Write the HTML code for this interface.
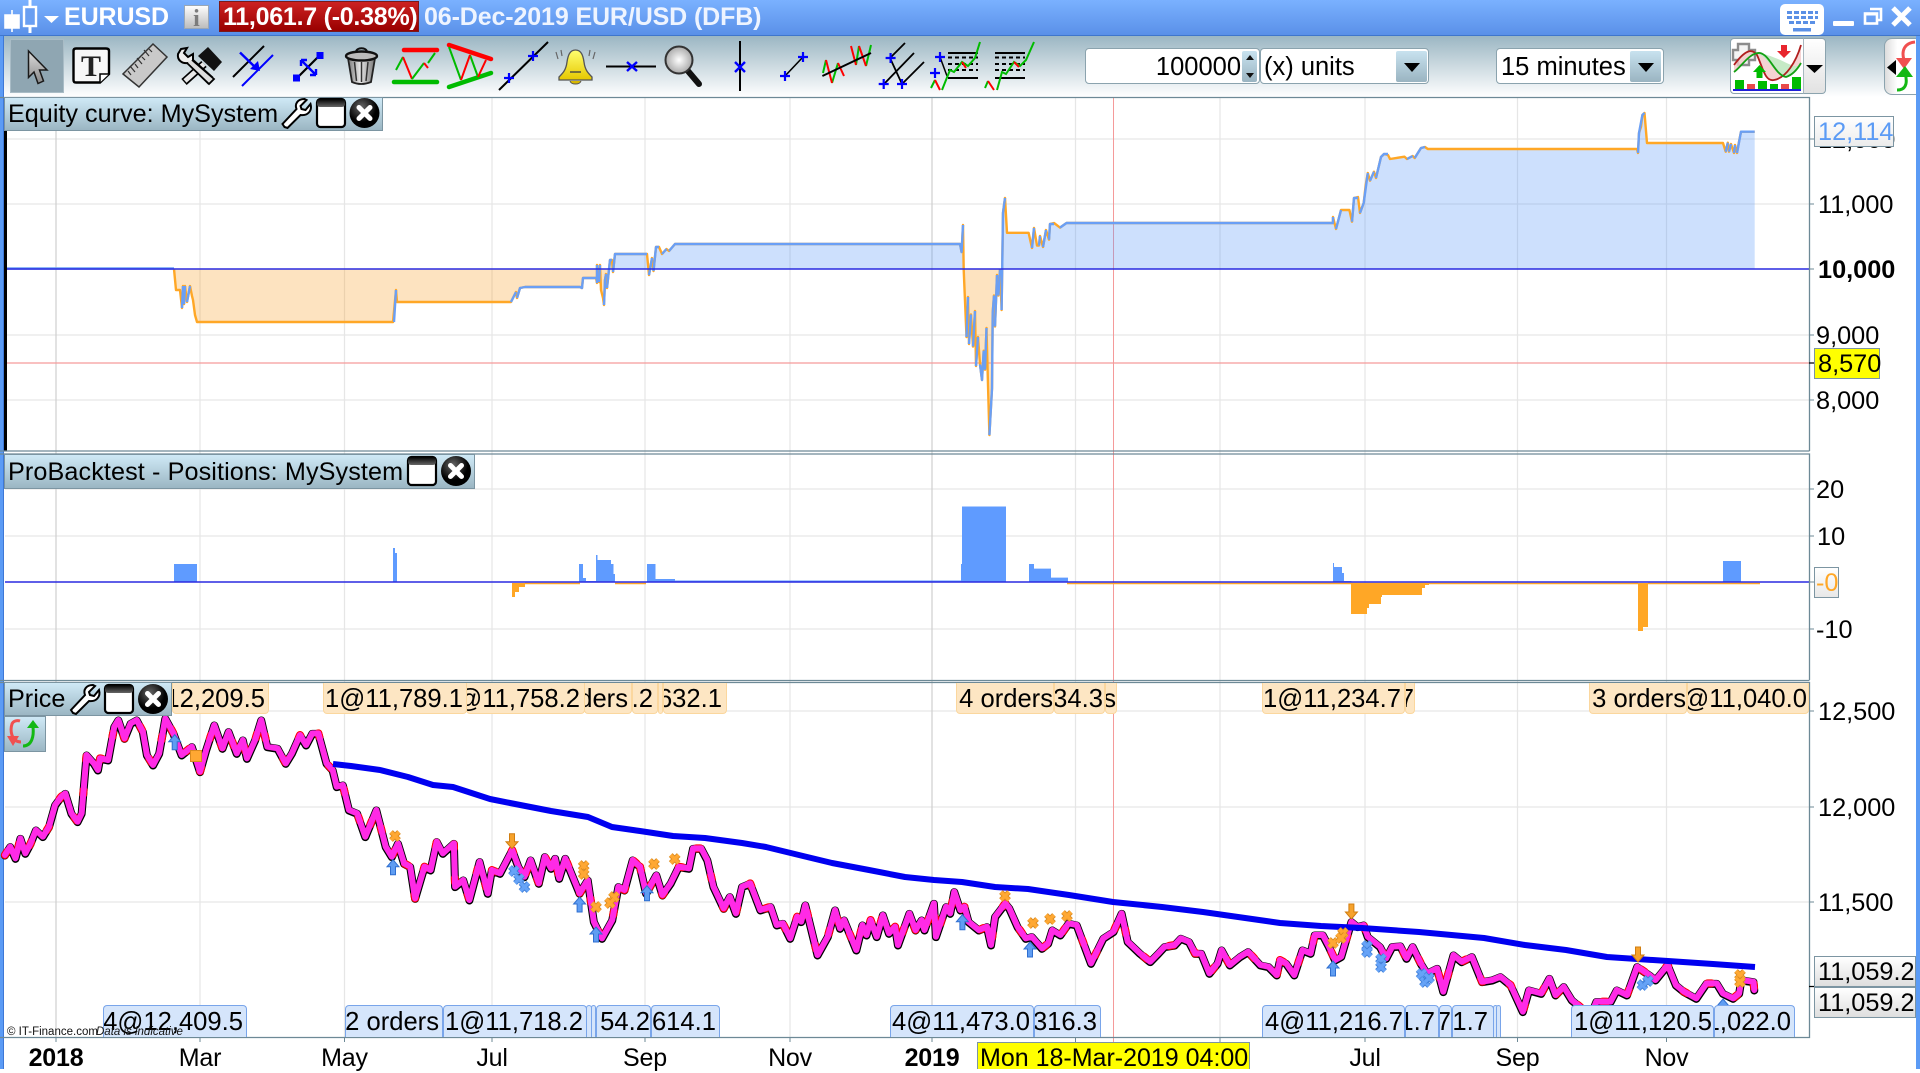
<!DOCTYPE html>
<html lang="en"><head><meta charset="utf-8"><title>EURUSD</title>
<style>
html,body{margin:0;padding:0;background:#fff}
body{width:1920px;height:1069px;position:relative;overflow:hidden;font-family:"Liberation Sans",Arial,sans-serif;font-size:25px;color:#000}
div,span{box-sizing:border-box}
.a{position:absolute;white-space:nowrap}
svg{position:absolute;left:0;top:0}
.n{vector-effect:non-scaling-stroke;fill:none;stroke-linejoin:round}
.y{position:absolute;left:1818px;height:32px;line-height:32px;font-size:25.3px}
.x{position:absolute;top:1043px;height:30px;line-height:30px;transform:translateX(-50%);letter-spacing:-.2px}
.o,.b{position:absolute;display:flex;justify-content:flex-end;overflow:hidden;white-space:nowrap;padding-right:3px;font-size:25.6px}
.o{top:683px;height:31px;line-height:32px;background:#fde6c3;border:1px solid #fbd79e;border-top:0;border-radius:0 0 4px 4px}
.b{top:1005px;height:32px;line-height:33px;background:#d5e5fb;border:1px solid #79a5ea;border-bottom:0;border-radius:4px 4px 0 0}
.h{position:absolute;background:linear-gradient(#cfe9f6,#9bb6c3);border:1px solid #7c95a2;line-height:32px;padding-left:3px;white-space:nowrap;font-size:25.2px}
.tag{position:absolute;left:1814px;border:1px solid #7c95a2;height:31px;line-height:31px;padding-left:3px;font-size:25.3px}
.inp{position:absolute;top:48px;height:36px;background:#fff;border:1px solid #8ba3ae;border-radius:4px;line-height:36px;font-size:25.5px}
.dd{position:absolute;top:51px;width:31px;height:31px;background:linear-gradient(#c8e2ef,#9ab4c1);border-radius:2px}
.dd:after{content:"";position:absolute;left:8px;top:12px;border-left:8px solid transparent;border-right:8px solid transparent;border-top:9px solid #000}
</style></head><body>

<div class="a" style="left:0;top:0;width:1920px;height:36px;background:linear-gradient(#7ab1ff,#5a90e8);border-bottom:1px solid #3f76cc"></div>
<div class="a" style="left:0;top:36px;width:1920px;height:61px;background:linear-gradient(#9bb6c3,#fff)"></div>
<div class="a" style="left:0;top:36px;width:4px;height:1033px;background:#5b9bf5;border-right:1px solid #3e78d6"></div>
<div class="a" style="left:1916px;top:36px;width:4px;height:1033px;background:#5b9bf5"></div>
<div class="a" style="left:4px;top:97px;width:1912px;height:972px;background:#fff"></div>
<div class="a" style="left:10px;top:39px;width:54px;height:54px;background:#8fa6b2;border:1px solid #a9bcc6"></div>

<svg width="1920" height="1069" viewBox="0 0 1920 1069">
<defs>
<clipPath id="up"><rect x="0" y="97" width="1809" height="172"/></clipPath>
<clipPath id="dn"><rect x="0" y="269" width="1809" height="182"/></clipPath>
<polyline id="p1" class="n" points="12,555 25,530 38,565 50,505 62,550 75,520 88,480 105,500 120,470 135,405 150,380 160,370 175,430 190,455 200,430 212,255 230,280 240,300 245,265 265,270 280,170 290,150 305,205 320,160 335,150 350,185 360,255 375,285 390,250 405,145 425,190 445,255 470,230 490,305 505,240 525,165 545,235 560,185 580,250 595,210 605,265 625,210 640,150 655,230 680,235 700,280 715,250 735,195 750,225 765,190 780,190 800,280 815,300 825,350 840,345 855,420 875,430 895,500 922,420 945,530 960,560 975,520 990,580 1005,590 1017,685 1040,590 1055,600 1070,515 1085,550 1112,520 1115,650 1135,630 1150,690 1175,575 1195,670 1205,600 1225,610 1255,540 1270,590 1285,620 1300,570 1320,640 1335,560 1350,595 1360,565 1370,625 1385,565 1420,670 1440,630 1455,755 1475,805 1500,750 1515,650 1530,660 1550,570 1568,590"/>
<polyline id="p2" class="n" points="0,590 15,670 40,615 55,675 75,640 95,590 120,595 130,535 150,535 165,570 180,650 205,715 220,680 235,730 250,650 270,640 295,720 320,710 335,765 350,760 368,805 385,740 395,755 405,705 435,855 460,800 478,720 490,775 500,750 530,840 545,765 555,795 565,750 580,800 595,735 610,790 625,770 632,825 660,730 675,780 690,750 697,780 720,700 725,800 750,710 760,730 770,665 785,720 795,710 805,755 830,780 850,770 860,825 870,740 895,700 905,715 925,770 945,805 960,800 985,835 1000,820 1010,780 1030,795 1050,760 1070,765 1105,880 1135,805 1160,785 1180,730 1195,815 1225,850 1250,875 1270,850 1285,830 1310,825 1325,805 1345,815 1360,850 1375,850 1395,910 1415,880 1425,840 1445,885 1470,860 1490,845 1520,885 1540,890 1560,915 1568,870"/>
<polyline id="p3" class="n" points="0,870 15,880 35,915 55,840 75,850 85,795 105,795 120,830 135,870 150,860 175,755 190,770 205,765 215,800 235,820 245,830 260,865 275,830 295,828 310,865 325,830 345,880 360,910 385,895 400,965 425,855 445,875 470,860 495,935 520,930 540,920 565,945 595,1025 610,960 640,970 660,925 675,975 695,950 715,990 735,1010 750,1030 770,1010 775,995 810,995 825,960 850,975 875,890 905,915 920,930 950,885 970,945 990,965 1020,985 1045,940 1070,940 1085,970 1110,985 1125,970 1130,930 1160,935 1162,960"/>
<g id="xo"><path d="M-4-4L4 4M4-4L-4 4" stroke="#d98a20" stroke-width="5.2" fill="none"/><path d="M-4-4L4 4M4-4L-4 4" stroke="#ffa833" stroke-width="3.4" fill="none"/></g>
<g id="xb"><path d="M-4-4L4 4M4-4L-4 4" stroke="#3f7fd8" stroke-width="5.2" fill="none"/><path d="M-4-4L4 4M4-4L-4 4" stroke="#66a3f7" stroke-width="3.4" fill="none"/></g>
<path id="au" d="M0-7L6 0H2.5V8H-2.5V0H-6Z" fill="#5f9df2" stroke="#2f6fd0" stroke-width="1"/>
<path id="ad" d="M0 7L6 0H2.5V-8H-2.5V0H-6Z" fill="#f6a22c" stroke="#d07d10" stroke-width="1"/>
</defs>

<!-- grid -->
<g stroke="#e6e6e6" stroke-width="1.2">
<path d="M5 139H1809M5 204H1809M5 335H1809M5 400H1809"/>
<path d="M5 489H1809M5 536H1809M5 629H1809"/>
<path d="M5 711H1809M5 807H1809M5 902H1809"/>
<path d="M200 97V1037M344.5 97V1037M492 97V1037M645 97V1037M790 97V1037M1075.5 97V1037M1220 97V1037M1365 97V1037M1517.5 97V1037M1666.5 97V1037"/>
</g>
<path d="M56 97V1037M932 97V1037" stroke="#cfcfcf" stroke-width="1.2"/>
<path d="M1113.5 97V1042" stroke="#f59a9a" stroke-width="1"/>
<path d="M56 1037V1042M200 1037V1042M344.5 1037V1042M492 1037V1042M645 1037V1042M790 1037V1042M932 1037V1042M1075.5 1037V1042M1220 1037V1042M1365 1037V1042M1517.5 1037V1042M1666.5 1037V1042" stroke="#6d8996" stroke-width="1"/>

<!-- equity fills -->
<polygon clip-path="url(#up)" fill="#5b97fa" fill-opacity=".3" points="174,269 176,290 180,290 182,308 183,286 184,304 185,286 187,302 190,286 192,296 193,300 195,315 197,322 393,322 396,290 397,302 511,302 513,298 516,292 517,298 520,288 525,287 580,287 582,288 583,278 596,278 597,283 597,265 599,282 600,265 601,290 603,298 604,305 605,280 606,274 607,288 610,260 612,260 613,272 615,254 647,254 649,275 652,258 653.5,271 656,247 659,247 662,254 666.5,249 669,251 675,244 960,244 961.6,252 963,225 963.7,269.7 966.5,337 968,297 969,344 971,314.5 973,346.5 975,311 976,366 978,337 980,364.5 982,380 983.7,350.7 985,369.7 986.5,328 988,385 989.4,435 992,388.6 992.7,312.8 994,295.5 995,326.5 997,275 998.4,295.5 1000,269.7 1001.6,310 1003,212.8 1005,198 1007,232.8 1028.6,232.8 1032,248 1034,228 1037,245.5 1039,245.5 1040,236 1043,247 1046,230 1049,239.7 1050,224 1054,223 1060,227.6 1066.5,223 1333,223 1333,217 1336,229 1341,210 1349.4,210 1352,221.7 1354,198 1358,197 1360,213 1363.7,203 1365.7,185 1367.8,173 1370,180.7 1374,171.7 1376,178 1381,157 1384,154 1388,155 1390,159 1404.5,156.7 1407,159 1412.6,156 1414.7,158 1421,148 1425,147 1427.8,149 1637,149 1638,153 1639,133 1641,126.7 1642.4,115 1644.5,113 1647,143 1723,143 1725.7,151.7 1727.8,142.7 1729,151.7 1731,144 1734,153 1735,145 1737,153 1739,141.7 1741,131.7 1754.7,131.7 1754.7,269"/>
<polygon clip-path="url(#dn)" fill="#f9a22d" fill-opacity=".3" points="174,269 176,290 180,290 182,308 183,286 184,304 185,286 187,302 190,286 192,296 193,300 195,315 197,322 393,322 396,290 397,302 511,302 513,298 516,292 517,298 520,288 525,287 580,287 582,288 583,278 596,278 597,283 597,265 599,282 600,265 601,290 603,298 604,305 605,280 606,274 607,288 610,260 612,260 613,272 615,254 647,254 649,275 652,258 653.5,271 656,247 659,247 662,254 666.5,249 669,251 675,244 960,244 961.6,252 963,225 963.7,269.7 966.5,337 968,297 969,344 971,314.5 973,346.5 975,311 976,366 978,337 980,364.5 982,380 983.7,350.7 985,369.7 986.5,328 988,385 989.4,435 992,388.6 992.7,312.8 994,295.5 995,326.5 997,275 998.4,295.5 1000,269.7 1001.6,310 1003,269 1754.7,269"/>

<path d="M5 363H1809" stroke="#f59a9a" stroke-width="1.2"/>

<!-- equity curve -->
<polyline fill="none" stroke="#ffa726" stroke-width="2.4" stroke-linejoin="round" points="174,269 176,290 180,290 182,308 183,286 184,304 185,286 187,302 190,286 192,296 193,300 195,315 197,322 393,322 396,290 397,302 511,302 513,298 516,292 517,298 520,288 525,287 580,287 582,288 583,278 596,278 597,283 597,265 599,282 600,265 601,290 603,298 604,305 605,280 606,274 607,288 610,260 612,260 613,272 615,254 647,254 649,275 652,258 653.5,271 656,247 659,247 662,254 666.5,249 669,251 675,244 960,244 961.6,252 963,225 963.7,269.7 966.5,337 968,297 969,344 971,314.5 973,346.5 975,311 976,366 978,337 980,364.5 982,380 983.7,350.7 985,369.7 986.5,328 988,385 989.4,435 992,388.6 992.7,312.8 994,295.5 995,326.5 997,275 998.4,295.5 1000,269.7 1001.6,310 1003,212.8 1005,198 1007,232.8 1028.6,232.8 1032,248 1034,228 1037,245.5 1039,245.5 1040,236 1043,247 1046,230 1049,239.7 1050,224 1054,223 1060,227.6 1066.5,223 1333,223 1333,217 1336,229 1341,210 1349.4,210 1352,221.7 1354,198 1358,197 1360,213 1363.7,203 1365.7,185 1367.8,173 1370,180.7 1374,171.7 1376,178 1381,157 1384,154 1388,155 1390,159 1404.5,156.7 1407,159 1412.6,156 1414.7,158 1421,148 1425,147 1427.8,149 1637,149 1638,153 1639,133 1641,126.7 1642.4,115 1644.5,113 1647,143 1723,143 1725.7,151.7 1727.8,142.7 1729,151.7 1731,144 1734,153 1735,145 1737,153 1739,141.7 1741,131.7 1754.7,131.7"/>
<path fill="none" stroke="#6a9ff5" stroke-width="2.4" stroke-linejoin="round" d="M5 268.5H174M182 308L183 286M184 304L185 286M187 302L190 286M394 322L396 290M511 302L513 298L516 292M517 298L520 288L525 287H580L582 288L583 278H596M597 283V265M599 282L600 265M604 305L605 280L606 274M607 288L610 260H612M613 272L615 254H647M649 275L652 258M653.5 271L656 247H659M662 254L666.5 249M669 251L675 244H960L961.6 252L963 225M966.5 337L968 297M969 344L971 314.5M973 346.5L975 311M976 366L978 337M980 364.5L982 380L983.7 350.7M985 369.7L986.5 328M989.4 435L992 388.6L992.7 312.8L994 295.5M995 326.5L997 275M998.4 295.5L1000 269.7M1001.6 310L1003 212.8L1005 198M1032 248L1034 228M1039 245.5L1040 236M1043 247L1046 230M1049 239.7L1050 224H1054M1060 227.6L1066.5 223H1333V217M1336 229L1341 210M1352 221.7L1354 198H1358M1360 213L1363.7 203L1367.8 173M1370 180.7L1374 171.7M1376 178L1381 157L1384 154H1388M1407 159L1412.6 156M1414.7 158L1421 148L1425 147M1638 153L1639 133L1642.4 115L1644.5 113M1725.7 151.7L1727.8 142.7M1729 151.7L1731 144M1734 153L1735 145M1737 153L1741 131.7H1754.7"/>
<path d="M5 269H1809" stroke="#2a2ae0" stroke-width="1.4"/>

<!-- positions bars -->
<g fill="#5f9bff">
<path d="M174 564H197V582H174ZM393 548H395V553H397V582H393ZM579 564H583V578H586V581H596V555H597.5V560H611V564H613.5V574H615V582H579ZM647 564H655.5V579H675V582H647ZM961 564H962V506.5H1006V582H961ZM1029 564H1034V568.6H1051V577.6H1068V582H1029ZM1333 563H1334V567H1342V573H1344V581H1351.4V582H1333ZM1723 561H1741V582H1723Z"/>
<path d="M675 581H961" stroke="#5f9bff" stroke-width="1" fill="none"/>
</g>
<g fill="#ffa726">
<path d="M512 583H525V587H519V592H515V597H512ZM1351 583H1429V585H1425V588H1422V595H1382V597H1381V604H1369V608H1367V614H1351ZM1638 583H1648V627H1643V631H1638Z"/>
<path d="M525 583.5H580M615 583.5H646M1067 583.5H1638M1648 583.5H1760" stroke="#ffa726" stroke-width="1.6" fill="none"/>
</g>
<path d="M5 582H1809" stroke="#2a2ae0" stroke-width="1.6"/>

<!-- price -->
<g stroke-linecap="round">
<g transform="translate(0,670.5) scale(.40816,.33333)" stroke="#000" stroke-width="8"><use href="#p1"/></g>
<g transform="translate(640,670.5) scale(.40816,.33333)" stroke="#000" stroke-width="8"><use href="#p2"/></g>
<g transform="translate(1280,670.5) scale(.40816,.33333)" stroke="#000" stroke-width="8"><use href="#p3"/></g>
<g transform="translate(0,670) scale(.40816,.33333)" stroke="#f00" stroke-width="8" stroke-dasharray="4 30"><use href="#p1"/></g>
<g transform="translate(640,670) scale(.40816,.33333)" stroke="#f00" stroke-width="8" stroke-dasharray="4 30"><use href="#p2"/></g>
<g transform="translate(1280,670) scale(.40816,.33333)" stroke="#f00" stroke-width="8" stroke-dasharray="4 30"><use href="#p3"/></g>
<g transform="translate(0,670) scale(.40816,.33333)" stroke="#ff2ae6" stroke-width="6"><use href="#p1"/></g>
<g transform="translate(640,670) scale(.40816,.33333)" stroke="#ff2ae6" stroke-width="6"><use href="#p2"/></g>
<g transform="translate(1280,670) scale(.40816,.33333)" stroke="#ff2ae6" stroke-width="6"><use href="#p3"/></g>
</g>
<!-- MA -->
<polyline fill="none" stroke="#0000f0" stroke-width="6" stroke-linejoin="round" points="333,764 351,766 380,770 408,777 433,785 453,787 490,799 510,803 551,811 588,817 612,827 640,831 673,836 705,838 742,843 766,847 803,856 832,863 869,870 905,877 934,880 962,882 995,887 1028,889 1069,895 1113,902 1162,907 1203,912 1280,923 1321,926 1362,928 1419,932 1484,938 1525,945 1566,950 1607,957 1668,961 1713,964 1755,967"/>

<!-- markers -->
<g>
<use href="#xo" x="395" y="836"/><use href="#xo" x="583.7" y="866"/><use href="#xo" x="583.7" y="874"/><use href="#xo" x="596" y="907"/><use href="#xo" x="614" y="897"/><use href="#xo" x="610" y="903"/><use href="#xo" x="654" y="864"/><use href="#xo" x="674.7" y="859"/><use href="#xo" x="1005" y="896"/><use href="#xo" x="1033" y="923"/><use href="#xo" x="1050" y="919"/><use href="#xo" x="1067" y="916"/><use href="#xo" x="1333" y="943"/><use href="#xo" x="1343" y="933"/><use href="#xo" x="1341" y="938"/><use href="#xo" x="1740" y="975"/><use href="#xo" x="1740" y="982"/>
<use href="#xb" x="514" y="871"/><use href="#xb" x="519" y="879"/><use href="#xb" x="524.5" y="887"/><use href="#xb" x="1367" y="946"/><use href="#xb" x="1367" y="952"/><use href="#xb" x="1381" y="959"/><use href="#xb" x="1381" y="967"/><use href="#xb" x="1421.6" y="974"/><use href="#xb" x="1425" y="982"/><use href="#xb" x="1429" y="978"/><use href="#xb" x="1642.4" y="985"/><use href="#xb" x="1648" y="981"/>
<use href="#au" x="174.7" y="741.7"/><use href="#au" x="393" y="866.7"/><use href="#au" x="579.6" y="904"/><use href="#au" x="596" y="934"/><use href="#au" x="647" y="892.7"/><use href="#au" x="962.4" y="921.7"/><use href="#au" x="1030" y="949"/><use href="#au" x="1333" y="968"/><use href="#au" x="1723" y="1006"/>
<use href="#ad" x="512" y="841.7"/><use href="#ad" x="1351.4" y="912"/><use href="#ad" x="1638" y="955"/>
<rect x="190.5" y="750.5" width="11" height="11" fill="#ffa833" stroke="#d98a20"/>
</g>

<!-- frame lines -->
<path d="M5.5 97V451" stroke="#000" stroke-width="3"/>
<g stroke="#6d8996" fill="none">
<path d="M0 97.5H1809.5V451M0 451H1809.5M0 454H1809.5V680M0 680.5H1809.5M0 682.5H1809.5V1037.5H0" stroke-width="1.3"/>
<path d="M1809 139H1814M1809 204H1814M1809 269H1814M1809 335H1814M1809 400H1814M1809 489H1814M1809 536H1814M1809 582H1814M1809 629H1814M1809 711H1814M1809 807H1814M1809 902H1814" stroke-width="1"/>
</g>
<path d="M1809 363H1814M1809 986.5H1814" stroke="#000" stroke-width="1.2"/>
</svg>

<!-- top labels -->
<div class="o" style="left:172px;width:97px">12,209.5</div>
<div class="o" style="left:323px;width:144px">1@11,789.1</div>
<div class="o" style="left:466px;width:119px;padding-right:4px">1@11,758.2</div>
<div class="o" style="left:584px;width:48px;padding-right:3px">2 orders</div>
<div class="o" style="left:632px;width:26px;padding-right:4px">.2</div>
<div class="o" style="left:658px;width:5px"></div>
<div class="o" style="left:663px;width:64px;padding-right:4px">1@11,632.1</div>
<div class="o" style="left:956px;width:98px;padding-right:0">4 orders</div>
<div class="o" style="left:1054px;width:51px;padding-right:1px">34.3</div>
<div class="o" style="left:1105px;width:12px;padding-right:0">s</div>
<div class="o" style="left:1262px;width:143px">1@11,234.7</div>
<div class="o" style="left:1405px;width:10px;padding-right:0">7</div>
<div class="o" style="left:1589px;width:98px;padding-right:0">3 orders</div>
<div class="o" style="left:1687px;width:122px;padding-right:1px">1@11,040.0</div>

<!-- bottom labels -->
<div class="b" style="left:103px;width:144px;padding-right:3px">4@12,409.5</div>
<div class="b" style="left:345px;width:98px;padding-right:3px">2 orders</div>
<div class="b" style="left:443px;width:144px;padding-right:3px">1@11,718.2</div>
<div class="b" style="left:586px;width:6px"></div>
<div class="b" style="left:591px;width:5px"></div>
<div class="b" style="left:596px;width:55px;padding-right:0">54.2</div>
<div class="b" style="left:651px;width:69px;padding-right:3px">614.1</div>
<div class="b" style="left:890px;width:144px;padding-right:3px">4@11,473.0</div>
<div class="b" style="left:1034px;width:67px;padding-right:3px">316.3</div>
<div class="b" style="left:1262px;width:143px;padding-right:1px">4@11,216.7</div>
<div class="b" style="left:1405px;width:34px;padding-right:3px">1.7</div>
<div class="b" style="left:1439px;width:13px;padding-right:0">7</div>
<div class="b" style="left:1452px;width:42px;padding-right:5px">1.7</div>
<div class="b" style="left:1493px;width:4px"></div>
<div class="b" style="left:1496px;width:5px"></div>
<div class="b" style="left:1571px;width:143px;padding-right:1px">1@11,120.5</div>
<div class="b" style="left:1714px;width:81px;padding-right:3px">1,022.0</div>

<div class="a" style="left:7px;top:1025px;font-size:11.5px;line-height:14px;color:#111">© IT-Finance.com</div>
<div class="a" style="left:96px;top:1025px;font-size:11.5px;line-height:14px;font-style:italic;color:#111">Data is indicative</div>

<!-- x axis -->
<div class="x" style="left:56px;font-weight:bold">2018</div>
<div class="x" style="left:200px">Mar</div>
<div class="x" style="left:344.5px">May</div>
<div class="x" style="left:492px">Jul</div>
<div class="x" style="left:645px">Sep</div>
<div class="x" style="left:790px">Nov</div>
<div class="x" style="left:932px;font-weight:bold">2019</div>
<div class="x" style="left:1365px">Jul</div>
<div class="x" style="left:1517.5px">Sep</div>
<div class="x" style="left:1666.5px">Nov</div>
<div class="a" style="left:977px;top:1042px;width:273px;height:27px;background:#ffff00;border:1px solid #7c95a2;border-bottom:0;line-height:31px;padding-left:2px;overflow:hidden">Mon 18-Mar-2019 04:00</div>

<!-- y axis -->
<div class="y" style="top:124px">12,000</div>
<div class="y" style="top:189px">11,000</div>
<div class="y" style="top:254px;font-weight:bold">10,000</div>
<div class="y" style="top:320px;left:1816px">9,000</div>
<div class="y" style="top:385px;left:1816px">8,000</div>
<div class="y" style="top:474px;left:1816px">20</div>
<div class="y" style="top:521px;left:1817px">10</div>
<div class="y" style="top:614px;left:1816px">-10</div>
<div class="y" style="top:696px">12,500</div>
<div class="y" style="top:792px">12,000</div>
<div class="y" style="top:887px">11,500</div>
<div class="tag" style="top:116px;width:80px;background:linear-gradient(#fff,#ececec);color:#5b9bf5">12,114</div>
<div class="tag" style="top:348px;width:66px;background:#ffff00">8,570</div>
<div class="tag" style="top:567px;width:25px;height:31px;padding-left:1px;background:linear-gradient(#fff,#e8e8e8);color:#ffa726">-0</div>
<div class="tag" style="top:956px;width:102px;background:linear-gradient(#fff,#dedede)">11,059.2</div>
<div class="tag" style="top:987px;width:102px;background:linear-gradient(#fff,#dedede)">11,059.2</div>

<!-- panel headers -->
<div class="h" style="left:4px;top:97px;width:379px;height:34px">Equity curve: MySystem</div>
<div class="h" style="left:4px;top:454px;width:471px;height:35px;line-height:35px;letter-spacing:.1px">ProBacktest - Positions: MySystem</div>
<div class="h" style="left:4px;top:682px;width:168px;height:34px">Price</div>
<div class="a" style="left:4px;top:716px;width:42px;height:36px;background:linear-gradient(#cfe9f6,#9bb6c3);border:1px solid #7c95a2"></div>

<!-- title -->
<div class="a" style="left:64px;top:1px;line-height:33px;color:#fff;font-weight:bold;letter-spacing:-.1px">EURUSD</div>
<div class="a" style="left:184px;top:5px;width:25px;height:24px;background:linear-gradient(#fdfdfd,#bdbdbd);border:1px solid #9aa7b5"></div>
<div class="a" style="left:219px;top:1px;width:200px;height:31px;background:linear-gradient(#cc2222,#990000);border:1px solid #7a1a1a;line-height:31px;padding-left:3px;color:#fff;font-weight:bold;letter-spacing:-.25px">11,061.7 (-0.38%)</div>
<div class="a" style="left:424px;top:1px;line-height:33px;color:#eef4ff;font-weight:bold;letter-spacing:-.12px">06-Dec-2019 EUR/USD (DFB)</div>

<!-- toolbar controls -->
<div class="inp" style="left:1085px;width:175px;text-align:right;padding-right:18px">100000</div>
<div class="a" style="left:1242px;top:51px;width:15px;height:31px;background:linear-gradient(#c8e2ef,#9ab4c1);border-radius:2px"></div>
<div class="inp" style="left:1260px;width:169px;padding-left:3px">(x) units</div>
<div class="dd" style="left:1396px"></div>
<div class="inp" style="left:1496px;width:168px;padding-left:4px">15 minutes</div>
<div class="dd" style="left:1630px"></div>
<div class="a" style="left:1730px;top:38px;width:74px;height:56px;background:#fff;border:1px solid #8ba3ae;border-radius:4px 0 0 4px"></div>
<div class="a" style="left:1803px;top:38px;width:23px;height:56px;background:linear-gradient(#fff,#e2e2e2);border:1px solid #8ba3ae;border-left:1px solid #a8b8c0;border-radius:0 4px 4px 0"></div>
<div class="a" style="left:1884px;top:38px;width:32px;height:57px;background:linear-gradient(90deg,#ddd,#fff 40%);border:1px solid #8ba3ae;border-right:0;border-radius:8px 0 0 8px"></div>
<div class="a" style="left:1780px;top:4px;width:44px;height:31px;background:#fff;border-radius:5px"></div>

<!-- icons -->
<svg width="1920" height="1069" viewBox="0 0 1920 1069">
<defs>
<linearGradient id="gg" x1="0" x2="1" y1="0" y2="0"><stop offset="0" stop-color="#777"/><stop offset=".45" stop-color="#e8e8e8"/><stop offset="1" stop-color="#777"/></linearGradient>
<linearGradient id="ar" x1="0" x2="0" y1="0" y2="1"><stop offset="0" stop-color="#ddd"/><stop offset="1" stop-color="#888"/></linearGradient>
<radialGradient id="mg"><stop offset="0" stop-color="#fff"/><stop offset="1" stop-color="#aaa"/></radialGradient>
<linearGradient id="yl" x1="0" x2="0" y1="0" y2="1"><stop offset="0" stop-color="#ffff70"/><stop offset="1" stop-color="#e6c800"/></linearGradient>
<linearGradient id="wt" x1="0" x2="0" y1="0" y2="1"><stop offset="0" stop-color="#000"/><stop offset="1" stop-color="#666"/></linearGradient>
<radialGradient id="cl" cx=".4" cy=".3"><stop offset="0" stop-color="#666"/><stop offset="1" stop-color="#000"/></radialGradient>
<path id="wr" d="M3 29L1 26L15 11C13 6 16 1 23 1L25 2L19 8L20 11L24 12L29 6C31 13 26 18 19 17L6 30Z" fill="#fff" stroke="#000" stroke-width="2"/>
<g id="win"><rect x="1" y="1" width="28" height="28" rx="3.5" fill="#fff" stroke="#000" stroke-width="2.2"/><rect x="1" y="1" width="28" height="8" rx="3" fill="url(#wt)"/></g>
<g id="cls"><ellipse cx="15" cy="15" rx="15" ry="15" fill="url(#cl)"/><path d="M9.5 9.5L20.5 20.5M20.5 9.5L9.5 20.5" stroke="#fff" stroke-width="5" stroke-linecap="round"/></g>
<g id="pl"><path d="M-5 0H5M0-5V5" stroke="#00f" stroke-width="2.2"/></g>
</defs>
<!-- header icons -->
<use href="#wr" x="281.5" y="98"/><use href="#win" x="316" y="98"/><use href="#cls" x="349.5" y="98"/>
<use href="#win" x="407" y="456"/><use href="#cls" x="441" y="456"/>
<use href="#wr" x="70" y="684"/><use href="#win" x="104" y="684"/><use href="#cls" x="138" y="684"/>
<!-- refresh mini -->
<path d="M21 742C11 742 10 730 12 724C13 721 17 720 20 721" fill="none" stroke="#f05050" stroke-width="3"/>
<path d="M7 736L19 736L13 746Z" fill="#f05050"/>
<path d="M23 746C32 746 34 736 33 727" fill="none" stroke="#14b814" stroke-width="3"/>
<path d="M27 728H39L33 720Z" fill="#14b814"/>

<!-- title icons -->
<path d="M12 10V32M5 15H19V28H5Z" fill="#fff" stroke="#fff" stroke-width="1.6"/>
<path d="M30 0V7M30 26V33" stroke="#fff" stroke-width="3"/>
<rect x="24" y="7" width="12" height="19" fill="#6a9ff2" stroke="#fff" stroke-width="2.4"/>
<path d="M44 16H59L51.5 23Z" fill="#fff"/>
<text x="196.5" y="26" text-anchor="middle" font-family="Liberation Serif,serif" font-weight="bold" font-size="24" fill="#7c7c7c">i</text>
<!-- keyboard -->
<g fill="#5b90e6">
<path d="M1787 11h5v3h-5zM1794 11h5v3h-5zM1801 11h5v3h-5zM1808 11h5v3h-5zM1815 11h3v3h-3zM1787 16h5v3h-5zM1794 16h5v3h-5zM1801 16h5v3h-5zM1808 16h5v3h-5zM1815 16h3v3h-3zM1789 21h5v3h-5zM1796 21h5v3h-5zM1803 21h5v3h-5zM1810 21h5v3h-5z"/>
<rect x="1793" y="28" width="18" height="3.5"/></g>
<!-- window controls -->
<rect x="1833" y="21" width="21" height="5" rx="1" fill="#fff"/>
<path d="M1870 9H1881V20H1876" fill="none" stroke="#fff" stroke-width="2.6"/>
<rect x="1865" y="13.5" width="12" height="10" fill="none" stroke="#fff" stroke-width="2.6"/>
<path d="M1865 14H1877" stroke="#fff" stroke-width="3"/>
<path d="M1893 8L1910 25M1910 8L1893 25" stroke="#fff" stroke-width="5"/>

<!-- arrow -->
<path d="M28.5 51L47 70H39.5L43.5 81L38 83.5L34 72L28.5 77.5Z" fill="url(#ar)" stroke="#1a1a1a" stroke-width="1.5"/>
<!-- T doc -->
<path d="M76 48.5H106Q109 48.5 109 51V74L100 82.5H76Q73.5 82.5 73.5 80V51Q73.5 48.5 76 48.5Z" fill="#f7f7f7" stroke="#000" stroke-width="2.4"/>
<path d="M100 82.5V74H109" fill="#fff" stroke="#000" stroke-width="1.5"/>
<text x="91" y="76" text-anchor="middle" font-family="Liberation Serif,serif" font-weight="bold" font-size="30" fill="#222">T</text>
<!-- ruler -->
<path d="M153 44L167 57L139 87L123 74Z" fill="#c9c9c9" stroke="#333" stroke-width="1.5"/>
<path d="M128 78L123 74M131 75L128 71M135 72L130 66M138 68L135 64M142 64L137 58M145 60L142 57M149 56L144 50M152 52L149 49" stroke="#333" stroke-width="1.2"/>
<!-- tools -->
<path d="M204 64L184 82" stroke="#000" stroke-width="8"/><path d="M204 64L185 81" stroke="#e8e8e8" stroke-width="4.6"/>
<path d="M208 47L222 62L214 71L198 56Z" fill="#111"/>
<path d="M181 49L187 48L184 53L188 57L193 54L193 60L212 77L208 83L188 63C182 64 177 60 178 54Z" fill="#eee" stroke="#000" stroke-width="2"/>
<path d="M192 60L214 79L209 84L187 63" fill="#ddd" stroke="#000" stroke-width="1.8"/>
<!-- parallel -->
<path d="M233 77L264 46" stroke="#000" stroke-width="2"/>
<path d="M242 86L273 55" stroke="#00f" stroke-width="2"/>
<path d="M240 52.5L257 69" stroke="#00f" stroke-width="2.4"/>
<path d="M260 71L250 69L258 61Z" fill="#00f"/>
<!-- resize line -->
<path d="M297 78L320 55" stroke="#000" stroke-width="2.2"/>
<rect x="293" y="74.5" width="7" height="7" fill="#00f"/><rect x="316.5" y="52" width="7" height="7" fill="#00f"/>
<path d="M301 60L316 75M301 60V66M301 60H307M316 75V69M316 75H310" fill="none" stroke="#00f" stroke-width="2.4"/>
<!-- trash -->
<path d="M348 58L352 82Q361 86 371 82L375 58Z" fill="url(#gg)" stroke="#222" stroke-width="1.8"/>
<path d="M354.5 62L356.5 81M361.5 62V82M368 62L366 81" stroke="#333" stroke-width="1.5"/>
<ellipse cx="361.5" cy="56" rx="15.5" ry="4.5" fill="#bbb" stroke="#111" stroke-width="2.4"/>
<path d="M356 52C356 47 367 47 367 52" fill="none" stroke="#111" stroke-width="2"/>
<!-- channel -->
<path d="M404 50H437" stroke="#f00" stroke-width="4.5" stroke-linecap="round"/>
<path d="M394 82H437" stroke="#0b0" stroke-width="4.5" stroke-linecap="round"/>
<path d="M396 70L403 57" stroke="#0b0" stroke-width="2"/><path d="M403 57L412 79" stroke="#f00" stroke-width="2"/><path d="M412 79L424 63" stroke="#0b0" stroke-width="2"/><path d="M424 63L428 68" stroke="#f00" stroke-width="2"/><path d="M428 63L435 53" stroke="#0b0" stroke-width="2"/>
<!-- triangle -->
<path d="M449 45L491 59" stroke="#f00" stroke-width="4.5" stroke-linecap="round"/>
<path d="M449 87L491 73" stroke="#0b0" stroke-width="4.5" stroke-linecap="round"/>
<path d="M449 47L461 80M470 55L478 77" stroke="#0b0" stroke-width="2"/><path d="M461 80L470 55M478 77L486 60" stroke="#f00" stroke-width="2"/>
<!-- line with crosses -->
<path d="M499 90L548 42" stroke="#000" stroke-width="2"/>
<use href="#pl" x="509" y="78"/><use href="#pl" x="533" y="56"/>
<!-- bell -->
<path d="M575.5 50C570 50 568 55 567 62C566 70 563 73 559 77V80H592V77C588 73 585 70 584 62C583 55 581 50 575.5 50Z" fill="url(#yl)" stroke="#555" stroke-width="1.3"/>
<path d="M570 81C571 85 580 85 581 81" fill="#d8b800" stroke="#555"/>
<path d="M570 72H581" stroke="#444" stroke-width="1.4"/>
<path d="M556 52L558 59M561 50L562 56M595 52L593 59M590 50L589 56" stroke="#666" stroke-width="1.2"/>
<!-- h line -->
<path d="M606 66.5H656" stroke="#000" stroke-width="2"/>
<path d="M627 62L637 71M637 62L627 71" stroke="#00f" stroke-width="2.4"/>
<!-- magnifier -->
<path d="M688 71L699 84" stroke="#111" stroke-width="6" stroke-linecap="round"/>
<circle cx="679" cy="60" r="13.5" fill="url(#mg)" stroke="#333" stroke-width="2"/>
<!-- vline -->
<path d="M740 41V91" stroke="#000" stroke-width="2"/>
<path d="M735 62L745 72M745 62L735 72" stroke="#00f" stroke-width="2.4"/>
<!-- segment -->
<path d="M785 76L803 57" stroke="#000" stroke-width="1.6"/>
<use href="#pl" x="785" y="76"/><use href="#pl" x="803" y="57"/>
<!-- wave -->
<path d="M823 73L826 60M832 83L838 63M856 65L859 46M866 66L871 45" stroke="#0b0" stroke-width="2" fill="none"/>
<path d="M826 60L832 83M838 63L844 76M851 46L856 65M859 46L866 66" stroke="#f00" stroke-width="2" fill="none"/>
<path d="M822.4 76L871 53" stroke="#000" stroke-width="2"/>
<!-- pitchfork -->
<path d="M890 58L905 43M884 84L914 53M902 84L924 62M890 58L902 84" stroke="#000" stroke-width="1.8"/>
<use href="#pl" x="890.6" y="58"/><use href="#pl" x="883.7" y="84"/><use href="#pl" x="902" y="84"/>
<!-- fib1 -->
<path d="M948 53H978M948 78H978" stroke="#000" stroke-width="2"/>
<path d="M948 57.5H978M948 64H978M948 70H978" stroke="#000" stroke-width="2" stroke-dasharray="4 3"/>
<path d="M940 57L947 76" stroke="#000" stroke-width="1.5"/>
<path d="M931 88L935 80M942 90L950 70L954 72L962 62L968 66L975 58L980 42" stroke="#0b0" stroke-width="2" fill="none"/>
<path d="M935 80L940 90M962 62L966 68" stroke="#f00" stroke-width="2" fill="none"/>
<use href="#pl" x="940" y="57"/><use href="#pl" x="935" y="73"/>
<!-- fib2 -->
<path d="M995 53H1025M995 78H1025" stroke="#000" stroke-width="2"/>
<path d="M995 57.5H1025M995 64H1025M995 70H1025" stroke="#000" stroke-width="2" stroke-dasharray="4 3"/>
<path d="M985 88L988 81M997 90L1002 72L1006 74L1014 62L1020 66L1026 60L1034 42" stroke="#0b0" stroke-width="2" fill="none"/>
<path d="M988 81L994 90M1014 62L1019 67" stroke="#f00" stroke-width="2" fill="none"/>
<!-- spinner -->
<path d="M1246 60H1254L1250 55ZM1246 73H1254L1250 78Z" fill="#111"/>
<!-- indicator icon -->
<path d="M1738 44H1749V50H1755V60H1749V65H1738V60H1733V50H1738Z" fill="#f4f4f4" stroke="#8c8c8c" stroke-width="2.4"/>
<path d="M1734 65C1745 50 1752 48 1757 55C1763 68 1765 82 1774 80C1786 78 1796 62 1801 45V63C1795 72 1790 76 1786 77C1775 75 1770 55 1760 53C1750 52 1742 66 1734 72Z" fill="#f3c8c8" fill-opacity=".8"/>
<path d="M1757 54C1768 56 1775 76 1786 77C1794 75 1798 68 1801 63C1795 72 1788 60 1760 53Z" fill="#c6eac6"/>
<path d="M1734 65C1745 50 1752 48 1757 55C1763 68 1765 82 1774 80C1786 78 1796 62 1801 45" fill="none" stroke="#b01e1e" stroke-width="1.8"/>
<path d="M1734 72C1742 66 1750 52 1760 53C1770 55 1775 75 1786 77C1792 75 1797 70 1801 63" fill="none" stroke="#14a014" stroke-width="1.8"/>
<path d="M1759.5 65L1766 72H1762.5V78H1756.5V72H1753Z" fill="#0b0"/>
<path d="M1784 58L1777 51H1781V45H1787V51H1791Z" fill="#e8262e"/>
<path d="M1735 80h9v9h-9zM1758 81h9v8h-9zM1770 84h8v5h-8zM1792 77h9v12h-9z" fill="#0b0"/>
<path d="M1747 84h8v5h-8zM1781 84h8v5h-8z" fill="#e84a4a"/>
<rect x="1733" y="89" width="68" height="2" fill="#1f1fd8"/>
<path d="M1806 65H1823L1814.5 73Z" fill="#000"/>
<!-- side button -->
<path d="M1896 60V75L1887 67.5Z" fill="#000"/>
<path d="M1915 42C1905 43 1901 50 1904 60" fill="none" stroke="#f05050" stroke-width="3"/>
<path d="M1896 58H1912L1904 69Z" fill="#f05050"/>
<path d="M1897 90C1908 90 1907 80 1905 73" fill="none" stroke="#14b814" stroke-width="3"/>
<path d="M1896 77H1913L1905 66Z" fill="#14b814"/>
</svg>
</body></html>
